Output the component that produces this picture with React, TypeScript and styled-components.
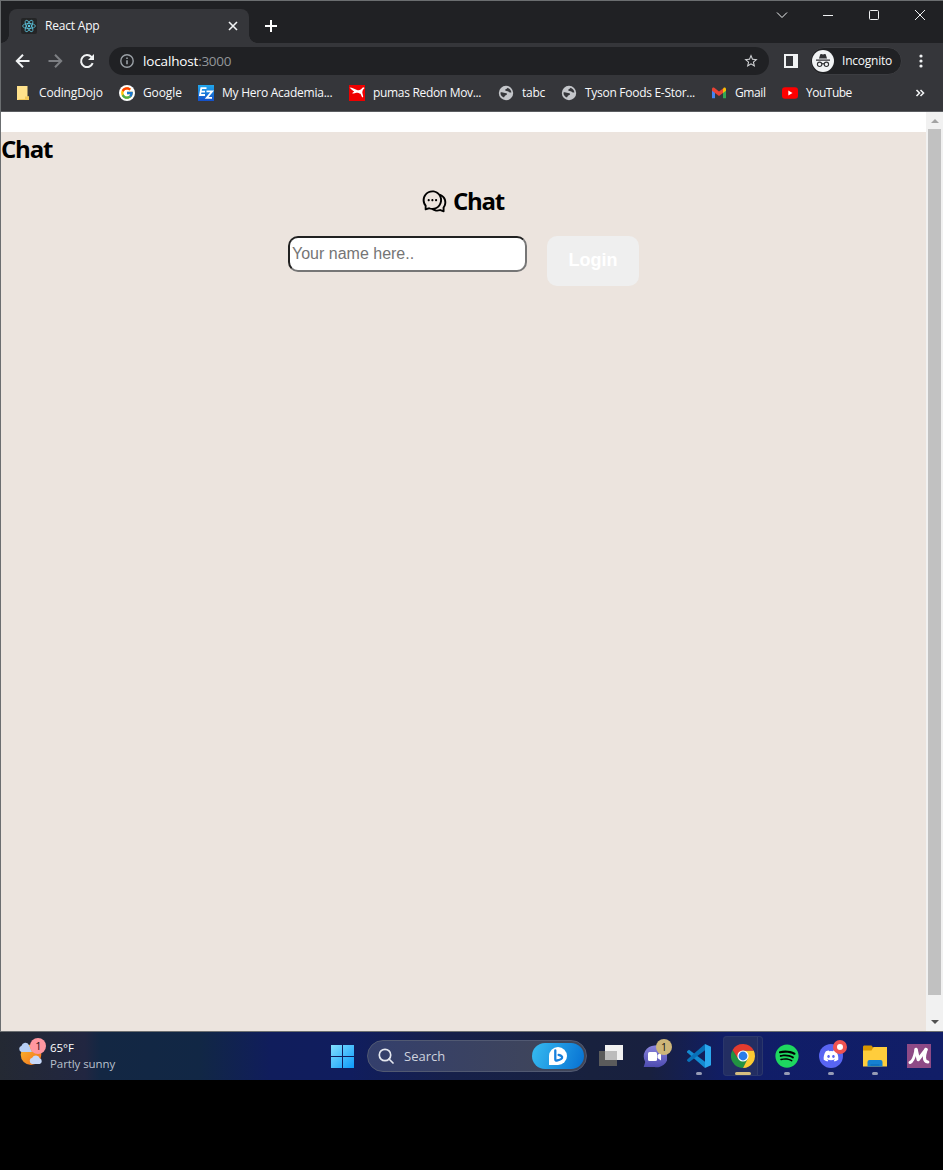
import React from 'react';
import styled, { createGlobalStyle } from 'styled-components';
import { AiOutlineComment } from 'react-icons/ai';
import { FcGoogle } from 'react-icons/fc';
import { FaSpotify, FaDiscord } from 'react-icons/fa';
import { MdStarBorder } from 'react-icons/md';

const GlobalStyle = createGlobalStyle`
  * { box-sizing: border-box; }
  html, body { margin: 0; background: #000; }
  body { font-family: "Open Sans", "Noto Sans", sans-serif; overflow: hidden; }
  svg { display: block; flex: none; }
`;

const Desktop = styled.div`
  width: 943px;
  height: 1170px;
  background: #000;
  display: flex;
  flex-direction: column;
`;

const BrowserWindow = styled.div`
  height: 1032px;
  border: solid #6b6e70;
  border-width: 1px 0 1px 1px;
  display: flex;
  flex-direction: column;
  background: #35363a;
`;

const TabStrip = styled.div`
  height: 42px;
  background: #202124;
  display: flex;
  align-items: flex-start;
  padding-left: 8px;
  flex: none;
`;

const Tab = styled.div`
  position: relative;
  width: 240px;
  height: 34px;
  margin-top: 8px;
  background: #35363a;
  border-radius: 8px 8px 0 0;
  display: flex;
  align-items: center;
  padding: 0 11px 0 12px;
  &::before, &::after {
    content: "";
    position: absolute;
    bottom: 0;
    width: 8px;
    height: 8px;
  }
  &::before { left: -8px; background: radial-gradient(circle at 0 0, #202124 7.5px, #35363a 8px); }
  &::after { right: -8px; background: radial-gradient(circle at 100% 0, #202124 7.5px, #35363a 8px); }
`;

const Favicon = styled.div`
  width: 16px;
  height: 16px;
  border-radius: 2px;
  background: #242526;
`;

const Label = styled.span<{ $spacing?: number; $size?: number; $color?: string }>`
  font-size: ${p => p.$size ?? 12}px;
  letter-spacing: ${p => p.$spacing ?? 0}px;
  color: ${p => p.$color ?? '#f8f9fa'};
  line-height: 16px;
  white-space: nowrap;
`;

const TabTitle = styled(Label)`
  margin-left: 8px;
  flex: 1;
`;

const NewTab = styled.div`
  margin: 19px 0 0 16px;
`;

const WindowControls = styled.div`
  margin: 8px 17px 0 auto;
  display: flex;
  gap: 34px;
`;

const Toolbar = styled.div`
  height: 36px;
  display: flex;
  align-items: center;
  flex: none;
  padding-left: 12px;
`;

const NavButtons = styled.div`
  display: flex;
  gap: 12px;
  width: 96px;
`;

const AddressBar = styled.div`
  width: 660px;
  height: 28px;
  border-radius: 14px;
  background: #202124;
  display: flex;
  align-items: center;
  padding: 0 10px 0 11px;
`;

const Url = styled.div`
  flex: 1;
  margin-left: 9px;
  display: flex;
`;

const PanelIcon = styled.div`
  width: 14px;
  height: 14px;
  margin: 0 12px 0 15px;
  border: 2px solid #f1f3f4;
  border-right-width: 5px;
`;

const IncognitoPill = styled.div`
  width: 92px;
  height: 28px;
  border-radius: 14px;
  border: 1px solid #3c3d41;
  background: #202124;
  display: flex;
  align-items: center;
  gap: 8px;
  padding-left: 1px;
`;

const IncognitoBadge = styled.div`
  width: 22px;
  height: 22px;
  border-radius: 50%;
  background: #f1f3f4;
  display: grid;
  place-items: center;
`;

const MenuDots = styled.div`
  margin-left: 17px;
`;

const Bookmarks = styled.div`
  height: 33px;
  padding: 0 18px 4px 14px;
  display: flex;
  align-items: center;
  border-bottom: 1px solid #5b5d61;
  flex: none;
`;

const Bookmark = styled.div<{ $width: number }>`
  width: ${p => p.$width}px;
  display: flex;
  align-items: center;
  gap: 8px;
  flex: none;
`;

const GoogleDisc = styled.div`
  width: 16px;
  height: 16px;
  border-radius: 50%;
  background: #fff;
  display: grid;
  place-items: center;
`;

const Overflow = styled.div`
  margin-left: auto;
`;

const Viewport = styled.div`
  flex: 1;
  display: flex;
  min-height: 0;
`;

const Page = styled.main`
  width: 925px;
  background: #fff;
  padding-top: 20px;
  display: flex;
`;

const ChatApp = styled.section`
  flex: 1;
  background: #ece4de;
  display: flex;
  flex-direction: column;
`;

const Heading = styled.h2`
  margin: 0;
  color: #000;
  font: 700 24px/34px "Open Sans", "Noto Sans", sans-serif;
  letter-spacing: -1.2px;
`;

const JoinTitle = styled(Heading)`
  margin: 18px 0 18px;
  padding-right: 2px;
  display: flex;
  justify-content: center;
  align-items: center;
  gap: 5px;
`;

const JoinForm = styled.form`
  display: flex;
  justify-content: center;
  align-items: flex-start;
  gap: 20px;
`;

const NameInput = styled.input`
  width: 239px;
  height: 36px;
  border: 2px inset #767676;
  border-radius: 10px;
  padding: 1px 2px;
  background: #fff;
  font: 16px "Liberation Sans", sans-serif;
  &::placeholder { color: #757575; }
`;

const LoginButton = styled.button`
  width: 92px;
  height: 50px;
  border: 0;
  border-radius: 10px;
  background: #efefef;
  color: #fff;
  font: 700 18px "Liberation Sans", sans-serif;
  padding: 0 0 2px;
`;

const Scrollbar = styled.div`
  width: 17px;
  background: #f1f1f1;
  display: flex;
  flex-direction: column;
  align-items: center;
  padding: 7px 0 7px;
`;

const Thumb = styled.div`
  width: 13px;
  height: 866px;
  background: #c1c1c1;
  margin: 6px 0 auto;
`;

const Taskbar = styled.footer`
  height: 48px;
  display: flex;
  align-items: center;
  overflow: hidden;
  background: linear-gradient(90deg, #242933 0, #212641 85px, #132743 100px, #112745 200px, #101d5c 270px, #101d5e 350px, #16204a 450px, #18213e 590px, #18203f 650px, #101d68 730px, #111e67 943px);
`;

const Weather = styled.div`
  display: flex;
  align-items: center;
  gap: 4px;
  width: 330px;
  flex: none;
  padding-left: 18px;
`;

const WeatherText = styled.div`
  display: flex;
  flex-direction: column;
`;

const SearchBox = styled.div`
  width: 220px;
  height: 32px;
  margin: 0 4px 0 12px;
  flex: none;
  border-radius: 16px;
  border: 1px solid #515972;
  background: linear-gradient(90deg, #343f6c, #414657);
  display: flex;
  align-items: center;
  padding: 0 2px 0 10px;
`;

const SearchText = styled(Label)`
  flex: 1;
  margin-left: 10px;
`;

const BingButton = styled.div`
  width: 52px;
  height: 26px;
  border-radius: 13px;
  background: linear-gradient(110deg, #37bcf1, #0670d2);
  display: grid;
  place-items: center;
`;

const TaskIcons = styled.div`
  display: flex;
  flex: none;
`;

const TaskItem = styled.div<{ $active?: boolean }>`
  position: relative;
  width: 40px;
  height: 40px;
  margin-right: 4px;
  border-radius: 4px;
  display: grid;
  place-items: center;
  ${p => p.$active && `
    background: linear-gradient(90deg, #232e62 34px, #303b6d 34px, #303b6d 35px, #1b2764 35px);
    box-shadow: inset 0 0 0 1px #2b376b;
  `}
`;

const Running = styled.span<{ $active?: boolean }>`
  position: absolute;
  left: 50%;
  bottom: ${p => (p.$active ? 1 : 1)}px;
  width: ${p => (p.$active ? 16 : 6)}px;
  height: 3px;
  border-radius: 2px;
  transform: translateX(-50%);
  background: ${p => (p.$active ? '#d5bd80' : '#969bb5')};
`;

const Badge = styled.span`
  position: absolute;
  top: 3px;
  right: 3px;
  width: 16px;
  height: 16px;
  border-radius: 50%;
  background: #cdb679;
  color: #111;
  font-size: 10.5px;
  line-height: 16px;
  text-align: center;
`;

const LiveBadge = styled.span`
  position: absolute;
  top: 4px;
  right: 4px;
  width: 14px;
  height: 14px;
  border-radius: 50%;
  border: 4px solid #ef5350;
  background: #fff;
`;

const SpotifyDisc = styled.div`
  width: 22px;
  height: 22px;
  border-radius: 50%;
  background: #000;
  color: #1ed760;
  display: flex;
  align-items: center;
  justify-content: center;
`;

const DiscordDisc = styled.div`
  width: 24px;
  height: 24px;
  border-radius: 50%;
  background: #5865f2;
  color: #fff;
  display: grid;
  place-items: center;
`;

const ReactLogo = () => (
  <svg width="16" height="16" viewBox="-8 -8 16 16" fill="none" stroke="#5ecbe6" strokeWidth=".75">
    <ellipse rx="6.4" ry="2.5" />
    <ellipse rx="6.4" ry="2.5" transform="rotate(60)" />
    <ellipse rx="6.4" ry="2.5" transform="rotate(120)" />
    <circle r="1.2" fill="#5ecbe6" stroke="none" />
  </svg>
);

const ArrowIcon = ({ color, forward }: { color: string; forward?: boolean }) => (
  <svg width="20" height="20" viewBox="0 0 20 20" fill="none" stroke={color} strokeWidth="2">
    <path d={forward ? 'M3.500 10h12.500M10 3.800l6.200 6.200-6.200 6.200' : 'M16.500 10H4M10 3.800 3.800 10l6.200 6.200'} />
  </svg>
);

const ReloadIcon = () => (
  <svg width="20" height="20" viewBox="0 0 20 20" fill="none" stroke="#f1f3f4" strokeWidth="2">
    <path d="M15.700 12.200A6 6 0 1 1 14.500 6l1.500 1.600" />
    <path d="M17 3v6h-6z" fill="#f1f3f4" stroke="none" />
  </svg>
);

const ControlIcon = ({ d }: { d: string }) => (
  <svg width="12" height="12" viewBox="0 0 12 12" fill="none" stroke="#f1f3f4" strokeWidth="1">
    <path d={d} />
  </svg>
);

const IncognitoIcon = () => (
  <svg width="16" height="16" viewBox="0 0 16 16" fill="#303134">
    <path d="M4 5.500 5.200 1.600q.3-.8 1.100-.5L8 1.600l1.700-.5q.8-.3 1.100.5L12 5.500zM1 6.500h14v1.200H1z" />
    <g fill="none" stroke="#303134" strokeWidth="1.1">
      <circle cx="4.600" cy="11.300" r="2.200" /><circle cx="11.400" cy="11.300" r="2.200" /><path d="M6.800 11q1.200-.8 2.400 0" />
    </g>
  </svg>
);

const GlobeIcon = () => (
  <svg width="16" height="16" viewBox="0 0 16 16">
    <circle cx="8" cy="8" r="7.200" fill="#c4c6ca" />
    <path d="M2.500 7.500C4.500 6.800 6 8 8.300 8.300c1 .2.9 1.500 0 1.700-1.800.4-1.500 1.500-2.300 2.500-2.300-.8-3.700-2.700-3.500-5zM9.500 2.800c-.3 1.500-2.500 1-2.300 2.400.2 1.200 2.300.5 3.200 1.300.8.8 1.500 1.300 3 1-.3-2.300-1.700-4-3.900-4.700z" fill="#35363a" />
  </svg>
);

const FolderMark = () => (
  <svg width="16" height="16" viewBox="0 0 16 16">
    <path d="M2 1h10.500v10.500H14V15H2z" fill="#ffe28c" />
    <path d="M10 11.500h4V15H3.500V14H10z" fill="#f3c95b" />
  </svg>
);

const EzMark = () => (
  <svg width="16" height="16" viewBox="0 0 16 16">
    <defs><linearGradient id="ez" x2="0" y2="1"><stop stopColor="#20a8ed" /><stop offset="1" stopColor="#1450c8" /></linearGradient></defs>
    <path fill="url(#ez)" d="M0 0h16v16H0z" />
    <path d="M8.500 3.200H3.300L2 10h5M3 6.600h4M8.500 6.300h5.700L8.700 12.800h5.300" fill="none" stroke="#fff" strokeWidth="1.8" />
  </svg>
);

const PumaMark = () => (
  <svg width="16" height="16" viewBox="0 0 16 16">
    <path fill="#ee0000" d="M0 0h16v16H0z" />
    <path d="M.6 2.600c2.900.1 5 1.700 7.400 2.500 2.500.7 4.200-.5 5.400-2.300l1.700-.5.2 1.100c-1.500 1-1.900 2.500-2 4l.9 4.400-1 .7-1.700-3.700c-1.500-.5-2.900-1.300-4.200-1L4.800 8.600 3 8.200l2.200-1.600C3.700 5.700 2 4.300.6 2.600z" fill="#fff" />
  </svg>
);

const GmailMark = () => (
  <svg width="16" height="16" viewBox="0 0 16 16">
    <path fill="#4285f4" d="M1 4v9.200h3V7z" />
    <path fill="#34a853" d="M12 7v6.200h3V4z" />
    <path fill="#fbbc04" d="M12 3.800V8l3-2.300V4c0-1.500-1.500-2-2.300-1.200z" />
    <path fill="#ea4335" d="M1 4c0-1.500 1.400-2 2.300-1.200L8 6.400l4-3V8l-4 3-4-3-3-2.300z" />
  </svg>
);

const YoutubeMark = () => (
  <svg width="16" height="16" viewBox="0 0 16 16">
    <rect y="2.300" width="16" height="11.400" rx="3" fill="#f00" />
    <path d="M6.300 5.500v5l4.200-2.500z" fill="#fff" />
  </svg>
);

const WeatherIcon = () => (
  <svg width="28" height="40" viewBox="0 -5 28 40">
    <defs><linearGradient id="sun" x2="1" y2="1"><stop stopColor="#f8bc30" /><stop offset="1" stopColor="#f46b1a" /></linearGradient></defs>
    <circle cx="13" cy="13.700" r="10.300" fill="url(#sun)" />
    <path d="M3.500 11a3.300 3.300 0 0 1 0-6.300 4 4 0 0 1 7.400-.8l3 7.100z" fill="#b7cff5" />
    <path d="M14 23a3.200 3.200 0 0 1 .2-6.200 4 4 0 0 1 7.500.5 3 3 0 0 1 0 5.700z" fill="#c7d9fa" />
    <circle cx="20" cy="5" r="8" fill="#ff97a0" />
    <text x="20.500" y="9" fontSize="11" textAnchor="middle" fill="#241216">1</text>
  </svg>
);

const StartIcon = () => (
  <svg width="25" height="25" viewBox="0 0 25 25">
    <defs><linearGradient id="win" x2="1" y2="1"><stop stopColor="#82e0ff" /><stop offset="1" stopColor="#0c9bfb" /></linearGradient></defs>
    <path fill="url(#win)" d="M1 1h11v11H1zM13 1h11v11H13zM1 13h11v11H1zM13 13h11v11H13z" />
  </svg>
);

const SearchIcon = () => (
  <svg width="16" height="16" viewBox="0 0 16 16" fill="none" stroke="#e4e7ef" strokeWidth="1.7">
    <circle cx="7" cy="7" r="5.700" /><path d="m11 11 4 4" strokeLinecap="round" />
  </svg>
);

const BingIcon = () => (
  <svg width="20" height="20" viewBox="0 0 20 20">
    <path d="M10 1a9 9 0 1 1 0 18H1v-9a9 9 0 0 1 9-9z" fill="#fff" />
    <path d="M7.300 4.500v8.700q0 1.500 1.600 1.300c3-.5 5.400-2 5.200-3.500-.2-1.200-2-1.800-3.500-2.200" fill="none" stroke="#1680dd" strokeWidth="2.300" strokeLinecap="round" strokeLinejoin="round" />
  </svg>
);

const TaskView = () => (
  <svg width="24" height="24" viewBox="0 0 24 24">
    <path fill="#5b5b5b" d="M0 7h18v15H0z" />
    <path fill="#f1f1f1" d="M6 1h18v15H6z" />
    <path fill="#bcbcbc" d="M6 7h12v9H6z" />
  </svg>
);

const MeetIcon = () => (
  <svg width="24" height="24" viewBox="0 0 24 24">
    <defs><linearGradient id="meet" x2="0" y2="1"><stop stopColor="#8a84dc" /><stop offset="1" stopColor="#4d4bb0" /></linearGradient></defs>
    <path d="M11.500 1.500a11 11 0 1 1 0 21.500H.7l1.500-5a11 11 0 0 1 9.300-16.500z" fill="url(#meet)" />
    <rect x="5" y="8" width="9" height="9" rx="1.500" fill="#fff" />
    <path d="m14.500 11 3.500-2.500v8L14.500 14z" fill="#fff" />
  </svg>
);

const CodeIcon = () => (
  <svg width="24" height="24" viewBox="0 0 24 24">
    <path d="M0 7.200 2 5.700l16 12.100V24L.2 8.500z" fill="#148bd2" />
    <path d="M18 6.200 2 18.300 0 16.800l.2-1.300L18 0z" fill="#0871b9" />
    <path d="m18 0 6 2.800v18.400L18 24z" fill="#2aa8ef" />
  </svg>
);

const ChromeIcon = () => (
  <svg width="24" height="24" viewBox="0 0 24 24">
    <path d="M1.600 6A12 12 0 0 0 12 24l4.900-9.300H7.300z" fill="#229342" />
    <path d="M12 6.600h10.700A12 12 0 0 1 12 24l4.700-9.300z" fill="#fccb32" />
    <path d="M12 6.600h10.700A12 12 0 0 0 1.600 6L7 14.500z" fill="#e33b2e" />
    <circle cx="12" cy="12" r="5.600" fill="#fff" />
    <circle cx="12" cy="12" r="4.400" fill="#2b7de9" />
  </svg>
);

const ExplorerIcon = () => (
  <svg width="24" height="24" viewBox="0 0 24 24">
    <path d="M0 3c0-1 .5-1.500 1.500-1.500h7L10.500 4 9 8H0z" fill="#d99700" />
    <path d="M0 6.500h8.500l2-3.500H24v19.500H0z" fill="#ffcd3c" />
    <path d="M4.500 22.500V18q0-2 2-2h11q2 0 2 2v4.500z" fill="#1580d1" />
    <path d="M7.500 20.500h9v1h-9z" fill="#0967b4" />
  </svg>
);

const MIcon = () => (
  <svg width="24" height="24" viewBox="0 0 24 24">
    <path fill="#8e4a86" d="M0 0h24v24H0z" />
    <g fill="none" stroke="#fff" strokeLinecap="round" strokeLinejoin="round">
      <path d="M3 18.500c3.500-1 5-8 6-12.500" strokeWidth="3" />
      <path d="m9 5.500 2.300 10 7.700-10" strokeWidth="3.400" />
      <path d="M19 5.500c-1.800 6-3 12 1.800 12.500" strokeWidth="3.200" />
    </g>
  </svg>
);

const bookmarks = [
  { title: 'CodingDojo', icon: <FolderMark />, width: 104, spacing: -0.14 },
  { title: 'Google', icon: <GoogleDisc><FcGoogle size={14} /></GoogleDisc>, width: 79, spacing: -0.1 },
  { title: 'My Hero Academia...', icon: <EzMark />, width: 151, spacing: -0.25 },
  { title: 'pumas Redon Mov...', icon: <PumaMark />, width: 149, spacing: -0.32 },
  { title: 'tabc', icon: <GlobeIcon />, width: 63, spacing: -0.25 },
  { title: 'Tyson Foods E-Stor...', icon: <GlobeIcon />, width: 150, spacing: -0.28 },
  { title: 'Gmail', icon: <GmailMark />, width: 71, spacing: -0.4 },
  { title: 'YouTube', icon: <YoutubeMark />, width: 90, spacing: -0.5 },
];

export default function App() {
  return (
    <Desktop>
      <GlobalStyle />
      <BrowserWindow>
        <TabStrip>
          <Tab>
            <Favicon><ReactLogo /></Favicon>
            <TabTitle $spacing={-0.2}>React App</TabTitle>
            <svg width="10" height="10" viewBox="0 0 10 10" stroke="#f1f3f4" strokeWidth="1.6"><path d="m1 1 8 8M9 1 1 9" /></svg>
          </Tab>
          <NewTab><svg width="12" height="12" viewBox="0 0 12 12" stroke="#fff" strokeWidth="2"><path d="M6 0v12M0 6h12" /></svg></NewTab>
          <WindowControls>
            <ControlIcon d="m1 3.500 5 5 5-5" />
            <ControlIcon d="M1 6.500h10" />
            <ControlIcon d="M2.500 1.500h7q1 0 1 1v7q0 1-1 1h-7q-1 0-1-1v-7q0-1 1-1z" />
            <ControlIcon d="m1 1 10 10M11 1 1 11" />
          </WindowControls>
        </TabStrip>
        <Toolbar>
          <NavButtons>
            <ArrowIcon color="#f1f3f4" />
            <ArrowIcon color="#7d7f83" forward />
            <ReloadIcon />
          </NavButtons>
          <AddressBar>
            <svg width="14" height="14" viewBox="0 0 14 14" fill="none" stroke="#9aa0a6" strokeWidth="1.4"><circle cx="7" cy="7" r="6.200" /><path d="M7 6.200v4M7 3.500v1.500" strokeWidth="1.6" /></svg>
            <Url>
              <Label $size={13.5} $spacing={-0.15} $color="#fff">localhost</Label>
              <Label $size={13.5} $spacing={-0.3} $color="#92969a">:3000</Label>
            </Url>
            <MdStarBorder size={16} color="#d0d2d5" />
          </AddressBar>
          <PanelIcon />
          <IncognitoPill>
            <IncognitoBadge><IncognitoIcon /></IncognitoBadge>
            <Label $spacing={-0.22}>Incognito</Label>
          </IncognitoPill>
          <MenuDots><svg width="4" height="14" viewBox="0 0 4 14" fill="#f1f3f4"><circle cx="2" cy="2" r="1.600" /><circle cx="2" cy="7" r="1.600" /><circle cx="2" cy="12" r="1.600" /></svg></MenuDots>
        </Toolbar>
        <Bookmarks>
          {bookmarks.map(b => (
            <Bookmark key={b.title} $width={b.width}>{b.icon}<Label $spacing={b.spacing}>{b.title}</Label></Bookmark>
          ))}
          <Overflow><svg width="10" height="8" viewBox="0 0 10 8" fill="none" stroke="#f1f3f4" strokeWidth="1.6"><path d="m1.500 1 3 3-3 3M5.500 1l3 3-3 3" /></svg></Overflow>
        </Bookmarks>
        <Viewport>
          <Page>
            <ChatApp>
              <Heading>Chat</Heading>
              <JoinTitle><AiOutlineComment size={27} />Chat</JoinTitle>
              <JoinForm>
                <NameInput placeholder="Your name here.." />
                <LoginButton type="button">Login</LoginButton>
              </JoinForm>
            </ChatApp>
          </Page>
          <Scrollbar>
            <svg width="8" height="4" viewBox="0 0 8 4" fill="#a3a3a3"><path d="M0 4h8L4 0z" /></svg>
            <Thumb />
            <svg width="8" height="4" viewBox="0 0 8 4" fill="#505050"><path d="M0 0h8L4 4z" /></svg>
          </Scrollbar>
        </Viewport>
      </BrowserWindow>
      <Taskbar>
        <Weather>
          <WeatherIcon />
          <WeatherText>
            <Label $size={11.5} $spacing={-0.05} $color="#fff">65°F</Label>
            <Label $size={11.5} $spacing={-0.08} $color="#b8c0cc">Partly sunny</Label>
          </WeatherText>
        </Weather>
        <StartIcon />
        <SearchBox>
          <SearchIcon />
          <SearchText $size={13} $color="#ced2de">Search</SearchText>
          <BingButton><BingIcon /></BingButton>
        </SearchBox>
        <TaskIcons>
          <TaskItem><TaskView /></TaskItem>
          <TaskItem><MeetIcon /><Badge>1</Badge></TaskItem>
          <TaskItem><CodeIcon /><Running /></TaskItem>
          <TaskItem $active><ChromeIcon /><Running $active /></TaskItem>
          <TaskItem><SpotifyDisc><FaSpotify size={24} /></SpotifyDisc><Running /></TaskItem>
          <TaskItem><DiscordDisc><FaDiscord size={16} /></DiscordDisc><LiveBadge /><Running /></TaskItem>
          <TaskItem><ExplorerIcon /><Running /></TaskItem>
          <TaskItem><MIcon /></TaskItem>
        </TaskIcons>
      </Taskbar>
    </Desktop>
  );
}
